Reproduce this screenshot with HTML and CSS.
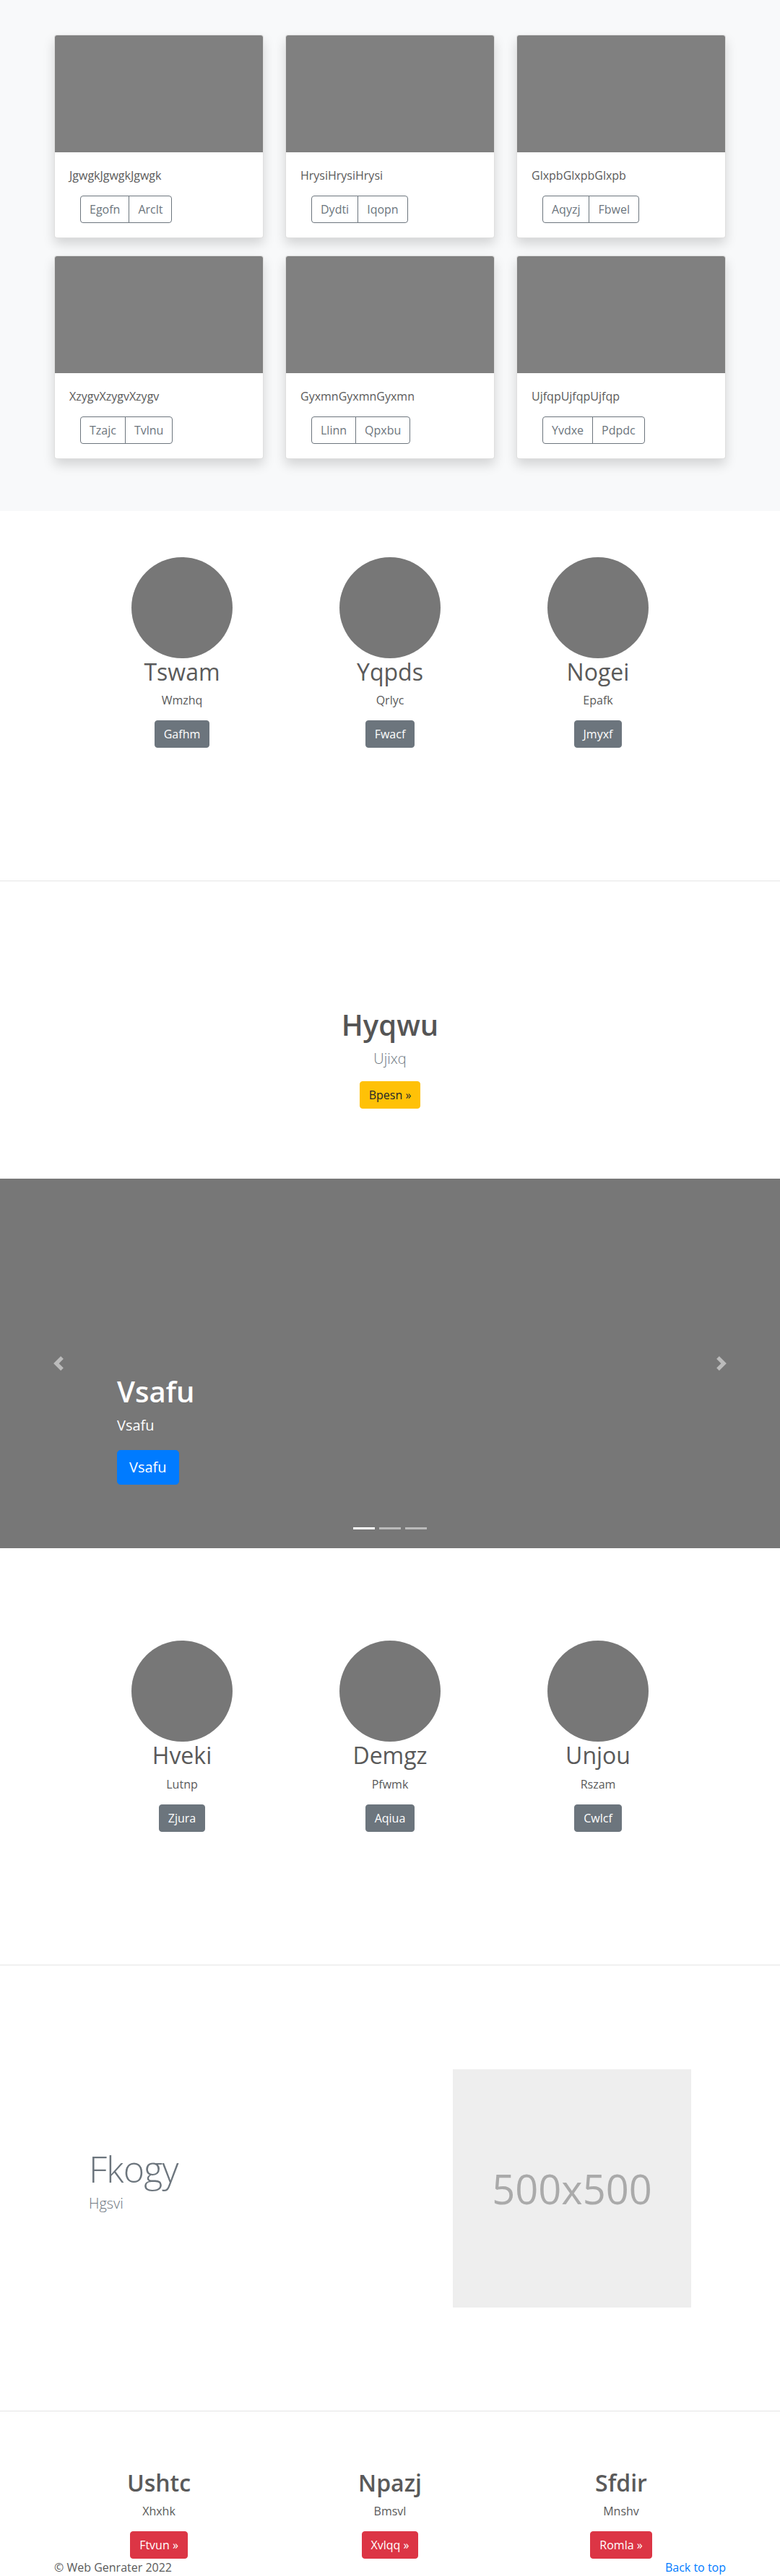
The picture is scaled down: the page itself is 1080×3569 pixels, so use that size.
FILE: index.html
```html
<!DOCTYPE html>
<html lang="en">
<head>
<meta charset="utf-8">
<title>Web Genrater</title>
<link rel="stylesheet" href="styles.css">
</head>
<body>

<section class="album">
  <div class="container">
    <div class="card-grid">
      <div class="card">
        <div class="card-img"></div>
        <div class="card-body">
          <p class="card-text">JgwgkJgwgkJgwgk</p>
          <div class="btn-group"><a class="btn btn-outline">Egofn</a><a class="btn btn-outline">Arclt</a></div>
        </div>
      </div>
      <div class="card">
        <div class="card-img"></div>
        <div class="card-body">
          <p class="card-text">HrysiHrysiHrysi</p>
          <div class="btn-group"><a class="btn btn-outline">Dydti</a><a class="btn btn-outline">Iqopn</a></div>
        </div>
      </div>
      <div class="card">
        <div class="card-img"></div>
        <div class="card-body">
          <p class="card-text">GlxpbGlxpbGlxpb</p>
          <div class="btn-group"><a class="btn btn-outline">Aqyzj</a><a class="btn btn-outline">Fbwel</a></div>
        </div>
      </div>
      <div class="card">
        <div class="card-img"></div>
        <div class="card-body">
          <p class="card-text">XzygvXzygvXzygv</p>
          <div class="btn-group"><a class="btn btn-outline">Tzajc</a><a class="btn btn-outline">Tvlnu</a></div>
        </div>
      </div>
      <div class="card">
        <div class="card-img"></div>
        <div class="card-body">
          <p class="card-text">GyxmnGyxmnGyxmn</p>
          <div class="btn-group"><a class="btn btn-outline">Llinn</a><a class="btn btn-outline">Qpxbu</a></div>
        </div>
      </div>
      <div class="card">
        <div class="card-img"></div>
        <div class="card-body">
          <p class="card-text">UjfqpUjfqpUjfqp</p>
          <div class="btn-group"><a class="btn btn-outline">Yvdxe</a><a class="btn btn-outline">Pdpdc</a></div>
        </div>
      </div>
    </div>
  </div>
</section>

<section class="marketing">
  <div class="mk-row">
    <div class="mk-col">
      <div class="circle"></div>
      <h2 class="mk-name">Tswam</h2>
      <p class="mk-text">Wmzhq</p>
      <div class="btn-wrap"><a class="btn btn-secondary">Gafhm</a></div>
    </div>
    <div class="mk-col">
      <div class="circle"></div>
      <h2 class="mk-name">Yqpds</h2>
      <p class="mk-text">Qrlyc</p>
      <div class="btn-wrap"><a class="btn btn-secondary">Fwacf</a></div>
    </div>
    <div class="mk-col">
      <div class="circle"></div>
      <h2 class="mk-name">Nogei</h2>
      <p class="mk-text">Epafk</p>
      <div class="btn-wrap"><a class="btn btn-secondary">Jmyxf</a></div>
    </div>
  </div>
</section>

<hr class="divider">

<section class="jumbo">
  <h1 class="jumbo-title">Hyqwu</h1>
  <p class="lead jumbo-lead">Ujixq</p>
  <div class="jumbo-btn"><a class="btn btn-warning">Bpesn »</a></div>
</section>

<section class="carousel">
  <div class="caption">
    <h1 class="caption-title">Vsafu</h1>
    <p class="caption-text">Vsafu</p>
    <div class="caption-btn"><a class="btn btn-lg btn-primary">Vsafu</a></div>
  </div>
  <a class="ctrl ctrl-prev" aria-label="Previous">
    <svg width="20" height="20" viewBox="0 0 8 8" fill="#fff"><path d="M5.25 0l-4 4 4 4 1.5-1.5L4.25 4l2.5-2.5L5.25 0z"/></svg>
  </a>
  <a class="ctrl ctrl-next" aria-label="Next">
    <svg width="20" height="20" viewBox="0 0 8 8" fill="#fff"><path d="M2.75 0l-1.5 1.5L3.75 4l-2.5 2.5L2.75 8l4-4-4-4z"/></svg>
  </a>
  <ol class="indicators">
    <li class="ind active"></li>
    <li class="ind"></li>
    <li class="ind"></li>
  </ol>
</section>

<section class="marketing">
  <div class="mk-row">
    <div class="mk-col">
      <div class="circle"></div>
      <h2 class="mk-name">Hveki</h2>
      <p class="mk-text">Lutnp</p>
      <div class="btn-wrap"><a class="btn btn-secondary">Zjura</a></div>
    </div>
    <div class="mk-col">
      <div class="circle"></div>
      <h2 class="mk-name">Demgz</h2>
      <p class="mk-text">Pfwmk</p>
      <div class="btn-wrap"><a class="btn btn-secondary">Aqiua</a></div>
    </div>
    <div class="mk-col">
      <div class="circle"></div>
      <h2 class="mk-name">Unjou</h2>
      <p class="mk-text">Rszam</p>
      <div class="btn-wrap"><a class="btn btn-secondary">Cwlcf</a></div>
    </div>
  </div>
</section>

<hr class="divider">

<section class="featurette">
  <div class="feat-row">
    <div class="feat-text">
      <h2 class="feat-heading">Fkogy</h2>
      <p class="lead feat-lead">Hgsvi</p>
    </div>
    <div class="feat-media">
      <div class="placeholder">500x500</div>
    </div>
  </div>
</section>

<hr class="divider">

<section class="features">
  <div class="container">
    <div class="feat-grid">
      <div class="feat-col">
        <h2 class="feat-title">Ushtc</h2>
        <p class="feat-sub">Xhxhk</p>
        <a class="btn btn-danger">Ftvun »</a>
      </div>
      <div class="feat-col">
        <h2 class="feat-title">Npazj</h2>
        <p class="feat-sub">Bmsvl</p>
        <a class="btn btn-danger">Xvlqq »</a>
      </div>
      <div class="feat-col">
        <h2 class="feat-title">Sfdir</h2>
        <p class="feat-sub">Mnshv</p>
        <a class="btn btn-danger">Romla »</a>
      </div>
    </div>
  </div>
</section>

<footer class="footer">
  <div class="container footer-row">
    <p class="footer-copy">© Web Genrater 2022</p>
    <a class="footer-link">Back to top</a>
  </div>
</footer>

</body>
</html>
```

FILE: styles.css
```css
* { box-sizing: border-box; }

html, body {
  margin: 0;
  padding: 0;
}

body {
  font-family: "Open Sans", "Noto Sans", sans-serif;
  font-size: 16px;
  line-height: 1.5;
  color: #5a5a5a;
  background: #fff;
}

p { margin: 0; }
h1, h2 { margin: 0; }

.container {
  width: 960px;
  margin: 0 auto;
  padding: 0 15px;
}

/* buttons */
.btn {
  display: inline-block;
  font-size: 16px;
  line-height: 24px;
  padding: 6px 12px;
  border: 1px solid transparent;
  border-radius: 4px;
  text-decoration: none;
  text-align: center;
  white-space: nowrap;
}
.btn-outline { color: #6c757d; border-color: #6c757d; background: transparent; }
.btn-secondary { color: #fff; background: #6c757d; border-color: #6c757d; }
.btn-warning { color: #212529; background: #ffc107; border-color: #ffc107; }
.btn-primary { color: #fff; background: #007bff; border-color: #007bff; }
.btn-danger { color: #fff; background: #dc3545; border-color: #dc3545; }
.btn-lg {
  font-size: 20px;
  line-height: 30px;
  padding: 8px 16px;
  border-radius: 4.8px;
}

/* album */
.album {
  background: #f8f9fa;
  padding: 48px 0 48px;
}
.card-grid {
  display: grid;
  grid-template-columns: repeat(3, 290px);
  column-gap: 30px;
}
.card {
  background: #fff;
  border: 1px solid rgba(0, 0, 0, .125);
  border-radius: 4px;
  overflow: hidden;
  margin-bottom: 24px;
  box-shadow: 0 8px 16px rgba(0, 0, 0, .15);
}
.card-img {
  height: 162px;
  background: #808080;
}
.card-body {
  padding: 20px;
}
.card-text {
  margin-bottom: 16px;
}
.btn-group {
  display: inline-flex;
  margin-left: 15px;
}
.btn-group .btn:first-child { border-radius: 4px 0 0 4px; }
.btn-group .btn + .btn { border-radius: 0 4px 4px 0; margin-left: -1px; }

/* marketing */
.marketing {
  padding: 64px 0 144px;
}
.mk-row {
  width: 864px;
  margin: 0 auto;
  display: grid;
  grid-template-columns: repeat(3, 1fr);
}
.mk-col {
  padding: 0 15px;
  margin-bottom: 24px;
  text-align: center;
}
.circle {
  width: 140px;
  height: 140px;
  border-radius: 50%;
  background: #777;
  margin: 0 auto;
}
.mk-name {
  font-size: 32px;
  line-height: 1.2;
  font-weight: 400;
  margin-bottom: 8px;
}
.mk-text {
  margin: 0 12px 16px;
}
.btn-wrap {
  margin-bottom: 16px;
}

.divider {
  border: 0;
  border-top: 1px solid rgba(0, 0, 0, .1);
  margin: 0;
  height: 0;
}

/* jumbotron */
.jumbo {
  text-align: center;
  padding: 175px 0 97px;
}
.jumbo-title {
  font-size: 40px;
  line-height: 1.2;
  font-weight: 600;
  color: #555;
  margin-bottom: 8px;
}
.lead {
  font-size: 20px;
  line-height: 30px;
  font-weight: 300;
  color: #6c757d;
}
.jumbo-lead {
  margin-bottom: 16px;
}

/* carousel */
.carousel {
  position: relative;
  height: 512px;
  background: #777;
  margin-bottom: 64px;
}
.caption {
  position: absolute;
  left: 15%;
  right: 15%;
  bottom: 48px;
  padding: 20px 0;
  color: #fff;
  text-align: left;
}
.caption-title {
  font-size: 40px;
  line-height: 1.2;
  font-weight: 600;
  margin-bottom: 8px;
}
.caption-text {
  font-size: 20px;
  line-height: 30px;
  margin-bottom: 19px;
}
.caption-btn {
  margin-bottom: 20px;
}
.ctrl {
  position: absolute;
  top: 0;
  bottom: 0;
  width: 15%;
  display: flex;
  align-items: center;
  justify-content: center;
  opacity: .5;
}
.ctrl svg { display: block; }
.ctrl-prev { left: 0; }
.ctrl-next { right: 0; }
.indicators {
  position: absolute;
  left: 15%;
  right: 15%;
  bottom: 0;
  margin: 0 0 16px;
  padding: 0;
  list-style: none;
  display: flex;
  justify-content: center;
}
.ind {
  width: 30px;
  height: 23px;
  margin: 0 3px;
  border-top: 10px solid transparent;
  border-bottom: 10px solid transparent;
  background: #fff;
  background-clip: padding-box;
  opacity: .5;
}
.ind.active { opacity: 1; }

/* featurette */
.featurette {
  padding: 144px 0 143px;
}
.feat-row {
  width: 864px;
  margin: 0 auto;
  display: flex;
  align-items: center;
}
.feat-text {
  flex: 0 0 58.3333%;
  padding: 0 15px;
}
.feat-media {
  flex: 0 0 41.6667%;
  padding: 0 15px;
}
.feat-heading {
  font-size: 50px;
  line-height: 1;
  font-weight: 300;
  letter-spacing: -0.8px;
  color: #6c757d;
  margin-bottom: 8px;
}
.feat-lead {
  margin-bottom: 16px;
}
.placeholder {
  width: 330px;
  height: 330px;
  background: #eee;
  color: #aaa;
  font-size: 56px;
  display: flex;
  align-items: center;
  justify-content: center;
}

/* features */
.features {
  padding-top: 80px;
}
.feat-grid {
  display: grid;
  grid-template-columns: repeat(3, 290px);
  column-gap: 30px;
}
.feat-col {
  text-align: center;
}
.feat-title {
  font-size: 32px;
  line-height: 1.2;
  font-weight: 600;
  margin-bottom: 8px;
}
.feat-sub {
  margin-bottom: 16px;
}

/* footer */
.footer-row {
  display: flex;
  justify-content: space-between;
}
.footer-link {
  color: #007bff;
  text-decoration: none;
}
```
